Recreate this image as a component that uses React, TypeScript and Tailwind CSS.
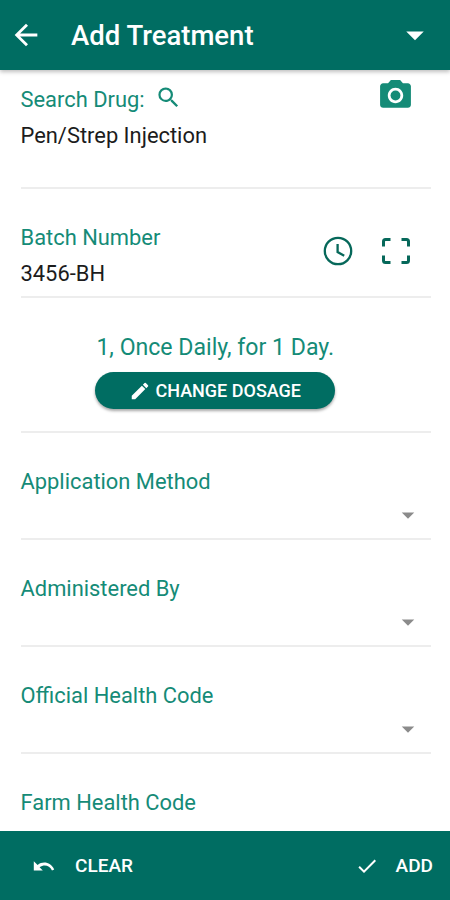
import type { ReactNode } from "react";
import { MdArrowBack, MdArrowDropDown, MdCameraAlt, MdCheck, MdEdit, MdSearch } from "react-icons/md";

const selects = ["Application Method", "Administered By", "Official Health Code"];

function Label({ children }: { children: ReactNode }) {
  return <div className="text-[21.9px] leading-[26px] text-[#158b77] whitespace-nowrap">{children}</div>;
}

function Value({ children }: { children: ReactNode }) {
  return <div className="mt-[10px] text-[21.9px] leading-[26px] text-[#1c1c1c]">{children}</div>;
}

function Header() {
  return (
    <header className="relative z-10 flex h-[70px] shrink-0 items-center bg-[#006d62] pl-[9px] pr-[14px] text-white shadow-[0_2px_4px_rgba(0,0,0,0.25)]">
      <MdArrowBack className="h-[34px] w-[34px]" />
      <h1 className="ml-7 pt-px text-[27.5px] leading-8 font-medium">Add Treatment</h1>
      <MdArrowDropDown className="ml-auto h-[42px] w-[42px]" />
    </header>
  );
}

function ClockIcon() {
  return (
    <svg viewBox="0 0 30 30" className="h-[30px] w-[30px]" fill="none" stroke="#06685a" strokeWidth="2.3">
      <circle cx="15" cy="15" r="13.2" />
      <path d="M14.6 8v8l6.600 3.800" />
    </svg>
  );
}

function ScanIcon() {
  return (
    <svg viewBox="0 0 30 28" className="h-7 w-[30px]" fill="none" stroke="#06685a" strokeWidth="3">
      <path d="M2.500 9.500V4.500Q2.500 2.500 4.500 2.500H9.500M20.500 2.500H25.500Q27.500 2.500 27.500 4.500V9.500M27.500 18.500V23.500Q27.500 25.500 25.500 25.500H20.500M9.500 25.500H4.500Q2.500 25.500 2.500 23.500V18.500" />
    </svg>
  );
}

function UndoIcon() {
  return (
    <svg viewBox="0 0 22 12" className="h-3 w-[22px]" fill="white">
      <path d="M.8 1.200V10.500H9.800L6.600 7.200C11 4.200 16.500 5.200 19 10.400L21.200 9.600C18 2.500 10.500 .6 4.600 4.900Z" />
    </svg>
  );
}

export default function App() {
  return (
    <div className="flex h-[900px] w-[450px] flex-col overflow-hidden bg-white font-[Roboto,sans-serif]">
      <Header />
      <main className="min-h-0 flex-1 overflow-hidden pl-[20.5px] pr-[19px]">
        <section className="flex h-[119px] justify-between border-b-2 border-[#ededed] pt-[17px]">
          <div>
            <div className="flex h-[26px] items-center gap-2.5">
              <Label>Search Drug:</Label>
              <MdSearch className="mb-[5px] h-[27px] w-[27px] text-[#158b77]" />
            </div>
            <Value>Pen/Strep Injection</Value>
          </div>
          <MdCameraAlt className="-mt-[10px] mr-[17px] h-[37px] w-[37px] text-[#158b77]" />
        </section>
        <section className="flex h-[109px] justify-between border-b-2 border-[#ededed] pt-9">
          <div>
            <Label>Batch Number</Label>
            <Value>3456-BH</Value>
          </div>
          <div className="mt-[11px] mr-5 flex h-[30px] items-center gap-7">
            <ClockIcon />
            <ScanIcon />
          </div>
        </section>
        <section className="flex h-[135px] flex-col items-center border-b-2 border-[#ededed] pt-[37px] pr-[21px]">
          <div className="text-[23.1px] leading-[26px] text-[#158b77]">1, Once Daily, for 1 Day.</div>
          <button className="mt-[11px] flex h-[37px] w-[240px] items-center justify-center gap-1 rounded-full bg-[#006d62] text-[18px] font-medium text-white shadow-[0_2px_3px_rgba(0,0,0,0.35)]">
            <MdEdit className="h-[22px] w-[22px]" />
            CHANGE DOSAGE
          </button>
        </section>
        {selects.map((name) => (
          <section key={name} className="h-[107px] border-b-2 border-[#ededed] pt-9">
            <Label>{name}</Label>
            <MdArrowDropDown className="mt-[5px] mr-[8px] ml-auto h-[30px] w-[30px] text-[#8b8b8b]" />
          </section>
        ))}
        <section className="pt-9">
          <Label>Farm Health Code</Label>
        </section>
      </main>
      <footer className="flex h-[69px] shrink-0 items-center bg-[#006d62] pr-[17px] pl-[33px] pt-px text-[19px] font-medium text-white">
        <UndoIcon />
        <span className="ml-5">CLEAR</span>
        <MdCheck className="ml-auto h-6 w-6" />
        <span className="ml-[17px]">ADD</span>
      </footer>
    </div>
  );
}
